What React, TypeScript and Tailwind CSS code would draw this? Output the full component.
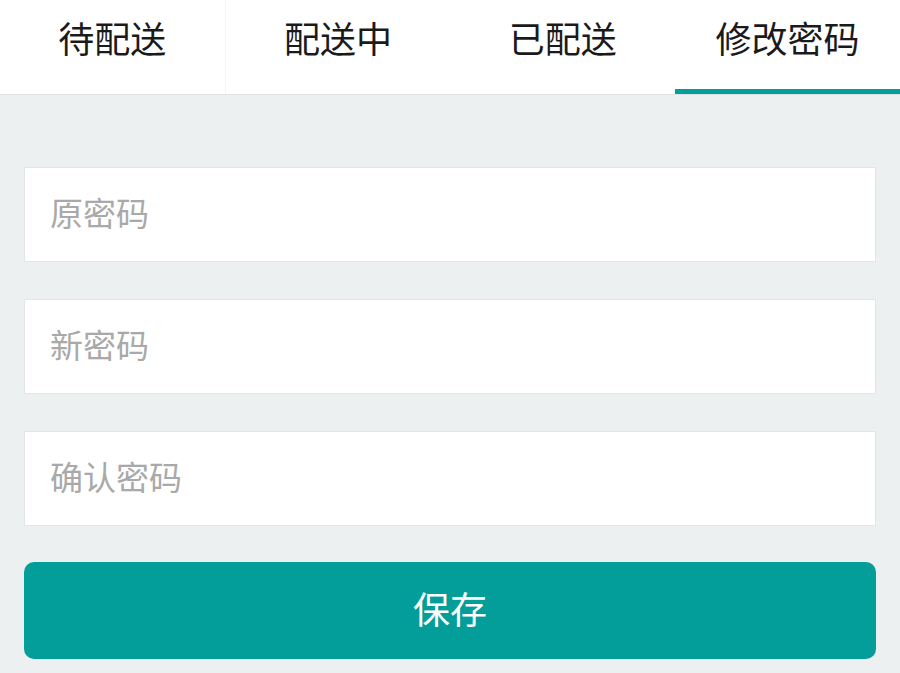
import React from "react";

const font = { fontFamily: '"Noto Sans CJK SC", "Noto Sans", sans-serif' };

export default function App() {
  const tabs = ["待配送", "配送中", "已配送", "修改密码"];
  const active = 3;
  return (
    <div className="w-[900px] h-[673px] bg-[#edf0f1] overflow-hidden" style={font}>
      <div className="flex h-[95px] bg-white border-b border-[#dfe2e3]">
        {tabs.map((t, i) => (
          <div
            key={t}
            className={`flex-1 relative flex items-center justify-center ${i === 0 ? "border-r border-[#f6f6f6]" : ""}`}
          >
            <span className="text-[36px] leading-none text-[#1a1a1a] -mt-[20px]">{t}</span>
            {i === active && (
              <div className="absolute left-0 right-0 bottom-0 h-[5px] bg-[#03a09b]" />
            )}
          </div>
        ))}
      </div>
      <div className="px-[24px] pt-[72px] flex flex-col gap-[37px]">
        {["原密码", "新密码", "确认密码"].map((p) => (
          <div
            key={p}
            className="h-[95px] bg-white border border-[#e3e6e7] flex items-center pl-[25px]"
          >
            <span className="text-[33px] leading-none text-[#a9a9a9] -mt-[5px]">{p}</span>
          </div>
        ))}
        <button className="-mt-[1px] h-[97px] rounded-[10px] bg-[#039e99] text-white text-[37px] leading-none flex items-center justify-center">
          <span className="-mt-[4px]">保存</span>
        </button>
      </div>
    </div>
  );
}
